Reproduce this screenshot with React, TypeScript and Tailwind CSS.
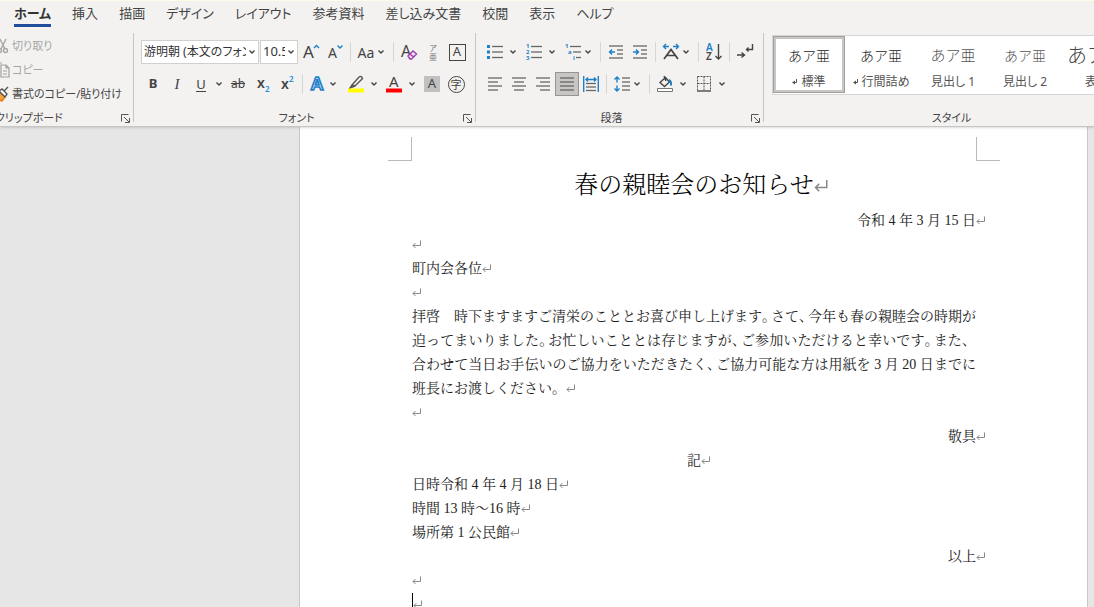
import type { ReactNode } from "react";

const tabs = ["ホーム", "挿入", "描画", "デザイン", "レイアウト", "参考資料", "差し込み文書", "校閲", "表示", "ヘルプ"];

const uiFont = "font-['Noto_Sans','Noto_Sans_CJK_JP',sans-serif] [font-feature-settings:'palt']";
const docFont = "font-['Liberation_Serif','Noto_Serif_CJK_JP','Noto_Sans_CJK_JP',serif] [font-feature-settings:normal]";

function Svg({ w = 16, h = 16, children }: { w?: number; h?: number; children: ReactNode }) {
  return (
    <svg
      width={w}
      height={h}
      viewBox={`0 0 ${w} ${h}`}
      fill="none"
      stroke="#555"
      strokeWidth="1.4"
      className="shrink-0 overflow-visible"
      aria-hidden="true"
    >
      {children}
    </svg>
  );
}

function Chevron() {
  return (
    <Svg w={6} h={4}>
      <path d="M.5 .5 3 3 5.5 .5" stroke="#444" />
    </Svg>
  );
}

function Tool({ label, active, children }: { label: string; active?: boolean; children: ReactNode }) {
  return (
    <button
      type="button"
      aria-label={label}
      className={`flex h-6 w-6 shrink-0 items-center justify-center ${active ? "border border-[#979593] bg-[#c8c6c4]" : ""}`}
    >
      {children}
    </button>
  );
}

function Split({ label, tight, children }: { label: string; tight?: boolean; children: ReactNode }) {
  return (
    <div className="flex shrink-0">
      <Tool label={label}>{children}</Tool>
      <button
        type="button"
        aria-label={`${label}のオプション`}
        className={`flex h-6 w-3 items-center ${tight ? "justify-start" : "justify-center"}`}
      >
        <Chevron />
      </button>
    </div>
  );
}

function Sep() {
  return <div className="mx-[3px] h-5 w-px shrink-0 bg-[#d8d6d4]" />;
}

function GroupSep() {
  return <div className="h-[89px] w-px shrink-0 bg-[#c8c6c4]" />;
}

function Launcher({ label }: { label: string }) {
  return (
    <button type="button" aria-label={label} className="mr-[3px] ml-1">
      <Svg w={9} h={9}>
        <path d="M.5 7.5V.5H7.5M3 3 8 8M8.5 4V8.5H4" strokeWidth="1" />
      </Svg>
    </button>
  );
}

function Caption({ text, launcher = true }: { text: string; launcher?: boolean }) {
  return (
    <div className="mt-auto flex h-4 items-center">
      <span className="flex-1 text-center text-[11px] leading-4 whitespace-nowrap text-[#444]">{text}</span>
      {launcher && <Launcher label={`${text}の設定`} />}
    </div>
  );
}

// horizontal strokes given as [x1, x2, y]
function Bars({ rows }: { rows: number[][] }) {
  return (
    <>
      {rows.map(([a, b, y]) => (
        <path key={y} d={`M${a} ${y}H${b}`} stroke="#666" strokeWidth="1.3" />
      ))}
    </>
  );
}

function Clipboard() {
  return (
    <section className="flex w-[133px] shrink-0 flex-col pt-px">
      <div className="-ml-[6px] text-[11px] whitespace-nowrap">
        <button type="button" className="flex h-6 items-center gap-[3px] text-[#a6a6a6]">
          <Svg w={15} h={16}>
            <g stroke="#a6a6a6">
              <path d="M6 1 11 11M12 1 7 11" />
              <circle cx="5.5" cy="12.5" r="2" />
              <circle cx="11.500" cy="12.5" r="2" />
            </g>
          </Svg>
          切り取り
        </button>
        <button type="button" className="flex h-6 items-center gap-[3px] text-[#a6a6a6]">
          <Svg w={15} h={16}>
            <g stroke="#a0a0a0" strokeWidth="1.2">
              <path d="M5 13H2V1H8" />
              <path d="M7 3H12L15 6V15H7ZM12 3V6H15M9 9H13M9 12H13" />
            </g>
          </Svg>
          コピー
        </button>
        <button type="button" className="flex h-6 items-center gap-[3px] text-[#444]">
          <Svg w={15} h={16}>
            <path d="M5 6 11 11 8 15Q4 14 2 9Z" fill="#f5a33b" stroke="#e07b1a" />
            <path d="M5 5 8 3 13 8 11 11ZM10 5 14 1" fill="#fff" />
          </Svg>
          書式のコピー/貼り付け
        </button>
      </div>
      <div className="mt-auto -ml-[5px] flex h-4 items-center justify-between">
        <span className="text-[11px] leading-4 text-[#444]">クリップボード</span>
        <Launcher label="クリップボードの設定" />
      </div>
    </section>
  );
}

function Picker({ label, value, width, text }: { label: string; value: string; width: string; text: string }) {
  return (
    <label className={`relative block shrink-0 ${width}`}>
      <select
        aria-label={label}
        className={`block h-6 w-full appearance-none overflow-hidden border border-[#d2d0ce] bg-white pr-3 pl-0.5 whitespace-nowrap text-[#333] ${text}`}
      >
        <option>{value}</option>
      </select>
      <span className="pointer-events-none absolute top-2.5 right-1">
        <Chevron />
      </span>
    </label>
  );
}

function FontGroup() {
  return (
    <section className="flex w-[341px] shrink-0 flex-col pt-[3px]">
      <div className="flex h-8 items-center pl-[7px]">
        <div className="flex gap-px pr-px">
          <Picker label="フォント" value="游明朝 (本文のフォント)" width="w-[118px]" text="text-[12px]" />
          <Picker label="フォント サイズ" value="10.5" width="w-[38px]" text="text-[13px]" />
        </div>
        <Tool label="フォント サイズの拡大">
          <Svg w={18} h={18}>
            <text x="1" y="15" fontSize="17" fill="#444" stroke="none">A</text>
            <path d="M12 5 14.500 2.500 17 5" stroke="#1e7fc8" />
          </Svg>
        </Tool>
        <Tool label="フォント サイズの縮小">
          <Svg w={18} h={18}>
            <text x="2" y="15" fontSize="14" fill="#444" stroke="none">A</text>
            <path d="M11.500 2.500 14 5 16.500 2.500" stroke="#1e7fc8" />
          </Svg>
        </Tool>
        <Sep />
        <Split label="文字種の変換" tight>
          <span className="text-[14px] text-[#444]">Aa</span>
        </Split>
        <Sep />
        <Tool label="書式のクリア">
          <Svg w={18} h={18}>
            <text x="1" y="14" fontSize="16" fill="#444" stroke="none">A</text>
            <path d="M8 13 13 8 16.500 11 11.500 16H10ZM10 11 13.500 14" stroke="#9b3fb0" fill="#f3e6f6" />
          </Svg>
        </Tool>
        <Tool label="ルビ">
          <span className="flex flex-col items-center text-[8px] leading-[9px] text-[#777]">
            <span>ア</span>
            <span>亜</span>
          </span>
        </Tool>
        <Tool label="囲み線">
          <span className="flex h-[17px] w-[17px] items-center justify-center border border-[#444] text-[13px] text-[#444]">A</span>
        </Tool>
      </div>
      <div className="flex h-8 items-center pl-[7px] text-[13px] text-[#444]">
        <div className="flex gap-px">
          <div className="flex">
            <Tool label="太字"><b>B</b></Tool>
            <Tool label="斜体"><i className="font-['Liberation_Serif',serif] text-[15px]">I</i></Tool>
            <Split label="下線"><span className="border-b border-[#444] leading-[14px]">U</span></Split>
          </div>
          <Tool label="取り消し線"><s className="text-[12px]">ab</s></Tool>
          <div className="flex">
            <Tool label="下付き">
              <Svg w={16} h={18}>
                <text x="2" y="13" fontSize="14" fontWeight="600" fill="#444" stroke="none">x</text>
                <text x="10" y="17" fontSize="8" fontWeight="600" fill="#1e8fe0" stroke="none">2</text>
              </Svg>
            </Tool>
            <Tool label="上付き">
              <Svg w={16} h={18}>
                <text x="2" y="14" fontSize="14" fontWeight="600" fill="#444" stroke="none">x</text>
                <text x="10" y="7" fontSize="8" fontWeight="600" fill="#1e8fe0" stroke="none">2</text>
              </Svg>
            </Tool>
          </div>
        </div>
        <Sep />
        <div className="flex gap-0.5">
          <Split label="文字の効果と体裁" tight>
            <Svg w={18} h={18}>
              <text x="2" y="15" fontSize="18" fontWeight="600" fill="#fff" stroke="#1e7fc8" strokeWidth="1.7">A</text>
            </Svg>
          </Split>
          <Split label="蛍光ペンの色">
            <Svg w={18} h={18}>
              <path d="M5 10 12 2Q14.500 .5 15.500 3.500L8 11ZM5 10 3 13 8 11" />
              <path d="M1 15.500H17" stroke="#ffff00" strokeWidth="4" />
            </Svg>
          </Split>
          <Split label="フォントの色">
            <Svg w={18} h={18}>
              <text x="4" y="12" fontSize="15" fill="#444" stroke="none">A</text>
              <path d="M1 15.500H17" stroke="#ff0000" strokeWidth="4" />
            </Svg>
          </Split>
          <div className="flex">
            <Tool label="文字の網かけ">
              <span className="flex h-4 w-4 items-center justify-center bg-[#c0c0c0] text-[13px]">A</span>
            </Tool>
            <Tool label="囲い文字">
              <span className="flex h-[17px] w-[17px] items-center justify-center rounded-full border border-[#444] text-[11px] leading-none">字</span>
            </Tool>
          </div>
        </div>
      </div>
      <Caption text="フォント" />
    </section>
  );
}

function ParagraphGroup() {
  return (
    <section className="flex w-[287px] shrink-0 flex-col pt-[3px]">
      <div className="flex h-8 items-center pl-[7px]">
        <div className="flex gap-[3px]">
          <Split label="箇条書き">
            <Svg>
              <path d="M0 2.500H3M0 8H3M0 13.500H3" stroke="#1e7fc8" strokeWidth="3" />
              <Bars rows={[[5, 16, 2.5], [5, 16, 8], [5, 16, 13.5]]} />
            </Svg>
          </Split>
          <Split label="段落番号">
            <Svg>
              <g fontSize="6" fontWeight="700" fill="#1e7fc8" stroke="none">
                <text x="0" y="4">1</text>
                <text x="0" y="10">2</text>
                <text x="0" y="16">3</text>
              </g>
              <Bars rows={[[5, 16, 2.5], [5, 16, 8], [5, 16, 13.5]]} />
            </Svg>
          </Split>
          <Split label="アウトライン" tight>
            <Svg>
              <g fontSize="6" fontWeight="700" fill="#1e7fc8" stroke="none">
                <text x="0" y="4">1</text>
                <text x="3" y="10">a</text>
                <text x="8" y="16">i</text>
              </g>
              <Bars rows={[[5, 16, 2.5], [8, 16, 8], [11, 16, 13.5]]} />
            </Svg>
          </Split>
        </div>
        <Sep />
        <Tool label="インデントを減らす">
          <Svg>
            <Bars rows={[[1, 15, 2], [9, 15, 6], [9, 15, 10], [1, 15, 14]]} />
            <path d="M7 8H1.500M4 5.500 1.500 8 4 10.500" stroke="#1e7fc8" />
          </Svg>
        </Tool>
        <Tool label="インデントを増やす">
          <Svg>
            <Bars rows={[[1, 15, 2], [9, 15, 6], [9, 15, 10], [1, 15, 14]]} />
            <path d="M1 8H6.500M4 5.500 6.500 8 4 10.500" stroke="#1e7fc8" />
          </Svg>
        </Tool>
        <Sep />
        <Split label="拡張書式" tight>
          <Svg w={18} h={18}>
            <path d="M2 16 9 6.500 16 16M5 12.500H13" strokeWidth="1.7" stroke="#444" />
            <path d="M7 3.500H1.500M4 1 1.500 3.500 4 6M11 3.500H16.500M14 1 16.500 3.500 14 6" stroke="#1e7fc8" />
          </Svg>
        </Split>
        <Sep />
        <Tool label="並べ替え">
          <Svg w={18} h={18}>
            <text x="1" y="8" fontSize="10" fontWeight="600" fill="#1e7fc8" stroke="none">A</text>
            <text x="1" y="17" fontSize="10" fontWeight="600" fill="#444" stroke="none">Z</text>
            <path d="M13.500 1V16M10.500 13 13.500 16 16.500 13" stroke="#444" />
          </Svg>
        </Tool>
        <Sep />
        <Tool label="編集記号の表示">
          <Svg w={18} h={18}>
            <path d="M16.500 1V6.500H10.500M12.500 4.500 10.500 6.500 12.500 8.500M1 12H8M5.500 9.500 8.500 12 5.500 14.500" stroke="#444" />
          </Svg>
        </Tool>
      </div>
      <div className="flex h-8 items-center pl-[7px]">
        <Tool label="左揃え">
          <Svg><Bars rows={[[1, 15, 2], [1, 11, 6], [1, 15, 10], [1, 11, 14]]} /></Svg>
        </Tool>
        <Tool label="中央揃え">
          <Svg><Bars rows={[[1, 15, 2], [3, 13, 6], [1, 15, 10], [3, 13, 14]]} /></Svg>
        </Tool>
        <Tool label="右揃え">
          <Svg><Bars rows={[[1, 15, 2], [5, 15, 6], [1, 15, 10], [5, 15, 14]]} /></Svg>
        </Tool>
        <Tool label="両端揃え" active>
          <Svg><Bars rows={[[1, 15, 2], [1, 15, 6], [1, 15, 10], [1, 15, 14]]} /></Svg>
        </Tool>
        <Tool label="均等割り付け">
          <Svg>
            <path d="M.7 0V16M15.300 0V16M3 3.500H13M5 1.500 3 3.500 5 5.500M11 1.500 13 3.500 11 5.500" stroke="#1e7fc8" />
            <Bars rows={[[3, 13, 7.5], [3, 13, 11], [3, 13, 14.5]]} />
          </Svg>
        </Tool>
        <Sep />
        <Split label="行と段落の間隔" tight>
          <Svg>
            <path d="M3 1V6.500M.5 3.500 3 1 5.500 3.500M3 9.500V15M.5 12.500 3 15 5.500 12.500" stroke="#1e7fc8" />
            <Bars rows={[[8, 16, 2], [8, 16, 6], [8, 16, 10], [8, 16, 14]]} />
          </Svg>
        </Split>
        <Sep />
        <div className="flex gap-[3px]">
          <Split label="塗りつぶし">
            <Svg>
              <path d="M3 6.500 8.500 1.500 12.500 6 7.500 10.500ZM7 0 9 5" stroke="#444" />
              <path d="M12 4Q14.500 5 14 9.500" stroke="#1e7fc8" strokeWidth="2" />
              <path d="M.5 12.500H15.500V15.500H.5Z" fill="#fff" strokeWidth="1" stroke="#777" />
            </Svg>
          </Split>
          <Split label="罫線">
            <Svg>
              <path d="M1.500 .5H14.500V14M1.500 .5V14M8 .5V14M1.500 7.500H14.500" strokeDasharray="2 1" strokeWidth="1" />
              <path d="M1 15H15" strokeWidth="1.5" />
            </Svg>
          </Split>
        </div>
      </div>
      <Caption text="段落" />
    </section>
  );
}

const styleItems = [
  { name: "標準", mark: true, preview: "text-[14px] text-[#222]" },
  { name: "行間詰め", mark: true, preview: "text-[14px] text-[#222]" },
  { name: "見出し 1", mark: false, preview: "text-[15px] text-[#555]" },
  { name: "見出し 2", mark: false, preview: "text-[14px] text-[#555]" },
  { name: "表題", mark: false, preview: "text-[20px] text-[#444]" },
];

function StylesGroup() {
  return (
    <section className="flex min-w-[375px] flex-1 flex-col pt-0.5">
      <div className="ml-2 flex h-[60px] border border-[#d8d6d4] bg-white">
        {styleItems.map((s, i) => (
          <button
            key={s.name}
            type="button"
            className={`flex h-[57px] w-[72px] shrink-0 flex-col items-center border-[3px] whitespace-nowrap ${
              i === 0 ? "border-[#c8c6c4] outline-1 -outline-offset-1 outline-[#a19f9d]" : "border-transparent"
            }`}
          >
            <span className={`h-[30px] font-['Noto_Sans_CJK_JP',sans-serif] leading-[32px] font-light [font-feature-settings:normal] ${s.preview}`}>
              あア亜
            </span>
            <span className="flex items-center gap-1 text-[12px] leading-[25px] text-[#555]">
              {s.mark && (
                <Svg w={5} h={6}>
                  <path d="M4.500 0V3.500H1" strokeWidth="1" />
                  <path d="M0 3.500 3 1.500V5.500Z" fill="#555" stroke="none" />
                </Svg>
              )}
              {s.name}
            </span>
          </button>
        ))}
      </div>
      <Caption text="スタイル" launcher={false} />
    </section>
  );
}

// paragraph mark, hangs outside the text width
function Mark({ big }: { big?: boolean }) {
  return (
    <svg
      viewBox="0 0 10 9"
      fill="none"
      stroke="#888"
      strokeWidth="1"
      className={`inline-block align-baseline ${big ? "-mr-[15px] h-[14px] w-[15px]" : "-mr-[10px] h-[9px] w-[10px]"}`}
      aria-hidden="true"
    >
      <path d="M8.500 .5V5.500H1M3.500 3 1 5.500 3.500 8" />
    </svg>
  );
}

// punctuation inside a full line is set narrower
function FullLine({ text }: { text: string }) {
  return (
    <span className="block [text-align-last:justify]">
      {text.split(/([、。](?!$))/).map((part, i) =>
        i % 2 ? (
          <span key={i} className="mr-0.5 [font-feature-settings:'halt']">{part}</span>
        ) : (
          part
        )
      )}
    </span>
  );
}

function Document() {
  return (
    <article className={`mr-1.5 min-w-[788px] flex-1 border-x border-[#c8c8c8] bg-white pt-2.5 pr-[111px] pl-[112px] text-[14px] leading-6 whitespace-nowrap text-[#222] ${docFont}`}>
      <div className="-mx-6 flex h-6 justify-between">
        <div className="w-6 border-r border-b border-[#bbb]" />
        <div className="w-6 border-b border-l border-[#bbb]" />
      </div>
      <h1 className="h-12 text-center text-[24px] leading-[48px] font-light text-black">春の親睦会のお知らせ<Mark big /></h1>
      <p className="text-right">令和 4 年 3 月 15 日<Mark /></p>
      <p><Mark /></p>
      <p>町内会各位<Mark /></p>
      <p><Mark /></p>
      <p>
        <FullLine text="拝啓　時下ますますご清栄のこととお喜び申し上げます。さて、今年も春の親睦会の時期が" />
        <FullLine text="迫ってまいりました。お忙しいこととは存じますが、ご参加いただけると幸いです。また、" />
        <FullLine text="合わせて当日お手伝いのご協力をいただきたく、ご協力可能な方は用紙を 3 月 20 日までに" />
        班長にお渡しください。<Mark />
      </p>
      <p><Mark /></p>
      <p className="text-right">敬具<Mark /></p>
      <p className="text-center">記<Mark /></p>
      <p>日時令和 4 年 4 月 18 日<Mark /></p>
      <p>時間 13 時～16 時<Mark /></p>
      <p>場所第 1 公民館<Mark /></p>
      <p className="text-right">以上<Mark /></p>
      <p><Mark /></p>
      <p className="flex">
        <span className="h-6 w-px bg-black" />
        <span><Mark /></span>
      </p>
    </article>
  );
}

export default function App() {
  return (
    <div lang="ja" className={`flex h-screen flex-col overflow-hidden bg-[#e6e6e6] ${uiFont}`}>
      <header className="relative z-10 shrink-0 border-t border-b border-t-[#fffbe6] border-b-[#c8c6c4] bg-[#f3f2f1] shadow">
        <nav className="flex h-8 gap-[21px] pl-[14px]">
          {tabs.map((tab, i) => (
            <button
              key={tab}
              type="button"
              className={`h-[26px] shrink-0 border-b-[3px] pt-px text-[13px] leading-[22px] whitespace-nowrap ${
                i === 0 ? "border-[#1f4e9c] font-bold text-[#333]" : "border-transparent text-[#444]"
              }`}
            >
              {tab}
            </button>
          ))}
        </nav>
        <div className="flex h-[93px] overflow-hidden">
          <Clipboard />
          <GroupSep />
          <FontGroup />
          <GroupSep />
          <ParagraphGroup />
          <GroupSep />
          <StylesGroup />
        </div>
      </header>
      <main className="flex flex-1 pl-[299px]">
        <Document />
      </main>
    </div>
  );
}
